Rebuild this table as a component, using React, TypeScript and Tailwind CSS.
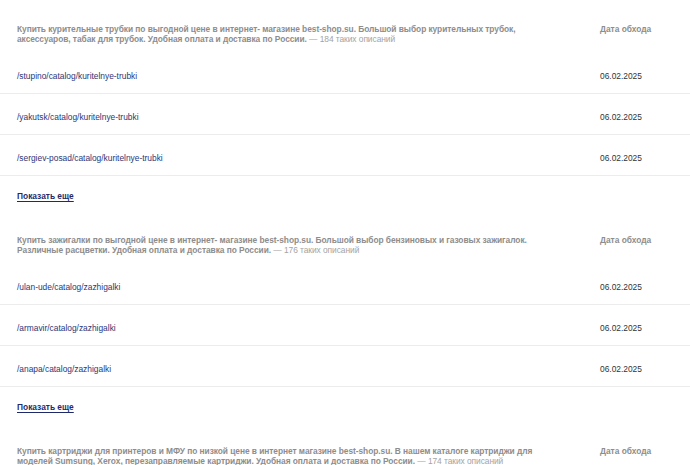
const sections = [
  {
    lines: [
      'Купить курительные трубки по выгодной цене в интернет- магазине best-shop.su. Большой выбор курительных трубок,',
      'аксессуаров, табак для трубок. Удобная оплата и доставка по России.',
    ],
    count: '184 таких описаний',
    rows: [
      '/stupino/catalog/kuritelnye-trubki',
      '/yakutsk/catalog/kuritelnye-trubki',
      '/sergiev-posad/catalog/kuritelnye-trubki',
    ],
  },
  {
    lines: [
      'Купить зажигалки по выгодной цене в интернет- магазине best-shop.su. Большой выбор бензиновых и газовых зажигалок.',
      'Различные расцветки. Удобная оплата и доставка по России.',
    ],
    count: '176 таких описаний',
    rows: ['/ulan-ude/catalog/zazhigalki', '/armavir/catalog/zazhigalki', '/anapa/catalog/zazhigalki'],
  },
  {
    lines: [
      'Купить картриджи для принтеров и МФУ по низкой цене в интернет магазине best-shop.su. В нашем каталоге картриджи для',
      'моделей Sumsung, Xerox, перезаправляемые картриджи. Удобная оплата и доставка по России.',
    ],
    count: '174 таких описаний',
    rows: [],
  },
];

function Section({ lines, count, rows }: (typeof sections)[number]) {
  return (
    <div className="pt-[24px] pb-[10px]">
      <div className="grid grid-cols-[600px_1fr] pb-[9px] leading-[10px]">
        <div className="pl-[17px] font-bold text-[#8d8d8d] whitespace-nowrap tracking-[-0.05px]">
          {lines[0]}
          <br />
          {lines[1]} <span className="font-normal text-[#a3a3a3]">— {count}</span>
        </div>
        <div className="font-bold text-[#8d8d8d]">Дата обхода</div>
      </div>
      {rows.map((r) => (
        <div key={r} className="grid grid-cols-[600px_1fr] border-b border-[#ececec] pt-[18px] pb-[12px] leading-[10px]">
          <a href="#" className="pl-[17px] text-[#2c3677]">
            {r}
          </a>
          <div className="text-[#333]">06.02.2025</div>
        </div>
      ))}
      {rows.length > 0 && (
        <div className="pt-[15px] pl-[17px] leading-[10px]">
          <a href="#" className="font-bold text-[#1f2a6b] underline underline-offset-2">
            Показать еще
          </a>
        </div>
      )}
    </div>
  );
}

export default function App() {
  return (
    <div className="w-[690px] h-[465px] overflow-hidden bg-white text-[8.4px] font-['Liberation_Sans',Arial,sans-serif]">
      {sections.map((s, i) => (
        <Section key={i} {...s} />
      ))}
    </div>
  );
}
